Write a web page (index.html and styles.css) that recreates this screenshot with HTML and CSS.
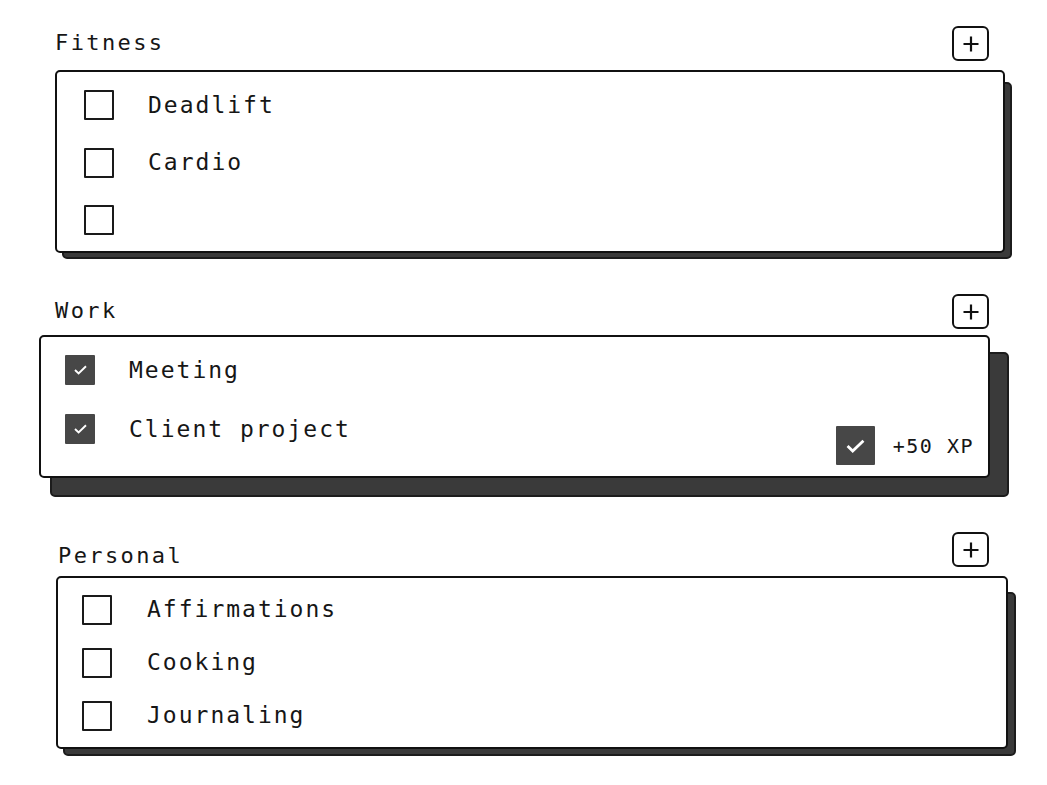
FILE: index.html
```html
<!DOCTYPE html>
<html lang="en">
<head>
<meta charset="utf-8">
<title>Quests</title>
<link rel="stylesheet" href="styles.css">
</head>
<body>
<main class="board">
  <section class="group group--fitness">
    <header class="group__head">
      <h2 class="group__title">Fitness</h2>
      <button class="add-btn" aria-label="Add task"><svg viewBox="0 0 16 16" width="16" height="16"><path d="M8 0.5V15.5M0.5 8H15.5" stroke="#111" stroke-width="2.2" fill="none"/></svg></button>
    </header>
    <div class="card card--fitness">
      <div class="task"><span class="box"></span><span class="task__label">Deadlift</span></div>
      <div class="task"><span class="box"></span><span class="task__label">Cardio</span></div>
      <div class="task"><span class="box"></span><span class="task__label"></span></div>
    </div>
  </section>

  <section class="group group--work">
    <header class="group__head">
      <h2 class="group__title">Work</h2>
      <button class="add-btn" aria-label="Add task"><svg viewBox="0 0 16 16" width="16" height="16"><path d="M8 0.5V15.5M0.5 8H15.5" stroke="#111" stroke-width="2.2" fill="none"/></svg></button>
    </header>
    <div class="card card--work">
      <div class="task"><span class="box box--checked"><svg viewBox="0 0 13 10" width="13" height="10"><path d="M1 5L4.6 8.4L12 1.2" stroke="#fff" stroke-width="1.9" fill="none"/></svg></span><span class="task__label">Meeting</span></div>
      <div class="task"><span class="box box--checked"><svg viewBox="0 0 13 10" width="13" height="10"><path d="M1 5L4.6 8.4L12 1.2" stroke="#fff" stroke-width="1.9" fill="none"/></svg></span><span class="task__label">Client project</span></div>
      <div class="xp">
        <span class="xp__check"><svg viewBox="0 0 20 15" width="19" height="14"><path d="M1.5 7.5L7 12.8L18.5 1.8" stroke="#fff" stroke-width="3" fill="none"/></svg></span>
        <span class="xp__text">+50 XP</span>
      </div>
    </div>
  </section>

  <section class="group group--personal">
    <header class="group__head">
      <h2 class="group__title">Personal</h2>
      <button class="add-btn" aria-label="Add task"><svg viewBox="0 0 16 16" width="16" height="16"><path d="M8 0.5V15.5M0.5 8H15.5" stroke="#111" stroke-width="2.2" fill="none"/></svg></button>
    </header>
    <div class="card card--personal">
      <div class="task"><span class="box"></span><span class="task__label">Affirmations</span></div>
      <div class="task"><span class="box"></span><span class="task__label">Cooking</span></div>
      <div class="task"><span class="box"></span><span class="task__label">Journaling</span></div>
    </div>
  </section>
</main>
</body>
</html>
```

FILE: styles.css
```css
* { box-sizing: border-box; }

html {
  background: #ffffff;
}

body {
  margin: 0;
  padding: 0;
  font-family: "DejaVu Sans Mono", "Liberation Mono", monospace;
  color: #161616;
}

.board {
  width: 1005px;
  padding: 26px 0 36px 55px;
}

.group {
  position: relative;
  z-index: 0;
}

.group__head {
  display: flex;
  justify-content: space-between;
  align-items: flex-start;
  padding-right: 16px;
}

.group__title {
  margin: 5.5px 0 0 0;
  font-size: 22px;
  line-height: 1;
  font-weight: 400;
  letter-spacing: 2.4px;
}

.add-btn {
  width: 37px;
  height: 35px;
  padding: 0;
  border: 2px solid #111;
  border-radius: 6px;
  background: #fff;
  display: flex;
  align-items: center;
  justify-content: center;
}

.add-btn svg { display: block; }

.card {
  position: relative;
  background: #fff;
  border: 2px solid #111;
  border-radius: 5px;
  font-size: 23px;
  letter-spacing: 2px;
}

.card::before {
  content: "";
  position: absolute;
  z-index: -1;
  background: #3a3a3a;
  border: 2px solid #1c1c1c;
  border-radius: 5px;
}

.task {
  display: flex;
  align-items: center;
}

.box {
  flex: none;
  width: 30px;
  height: 30px;
  border: 2px solid #1a1a1a;
  border-radius: 1px;
  display: flex;
  align-items: center;
  justify-content: center;
}

.box--checked {
  background: #474747;
  border-color: #474747;
}

.box svg { display: block; }

.task__label { line-height: 1; }

/* Fitness */
.card--fitness {
  margin-top: 9px;
  width: 950px;
  height: 183px;
  padding: 4.5px 0 0 27px;
}
.card--fitness::before { left: 5px; right: -9px; top: 10px; bottom: -8px; }
.card--fitness .task { height: 57.5px; gap: 34px; }

/* Work */
.group--work { margin-top: 41px; }
.card--work {
  margin-top: 6px;
  margin-left: -16px;
  width: 951px;
  height: 143px;
  padding: 3.5px 0 0 24px;
}
.card--work::before { left: 9px; right: -21px; top: 15px; bottom: -21px; }
.card--work .task { height: 59px; gap: 34px; }

.xp {
  position: absolute;
  right: 14px;
  bottom: 11px;
  display: flex;
  align-items: center;
  gap: 18px;
}

.xp__check {
  width: 39px;
  height: 39px;
  background: #474747;
  border-radius: 1px;
  display: flex;
  align-items: center;
  justify-content: center;
}

.xp__check svg { display: block; }

.xp__text {
  font-size: 20px;
  letter-spacing: 1.5px;
  line-height: 1;
}

/* Personal */
.group--personal { margin-top: 54px; }
.group--personal .group__title { margin-top: 12.5px; margin-left: 3px; }
.card--personal {
  margin-top: 9px;
  margin-left: 1px;
  width: 952px;
  height: 173px;
  padding: 5px 0 0 24px;
}
.card--personal::before { left: 5px; right: -10px; top: 14px; bottom: -9px; }
.card--personal .task { height: 53px; gap: 35px; }
```
